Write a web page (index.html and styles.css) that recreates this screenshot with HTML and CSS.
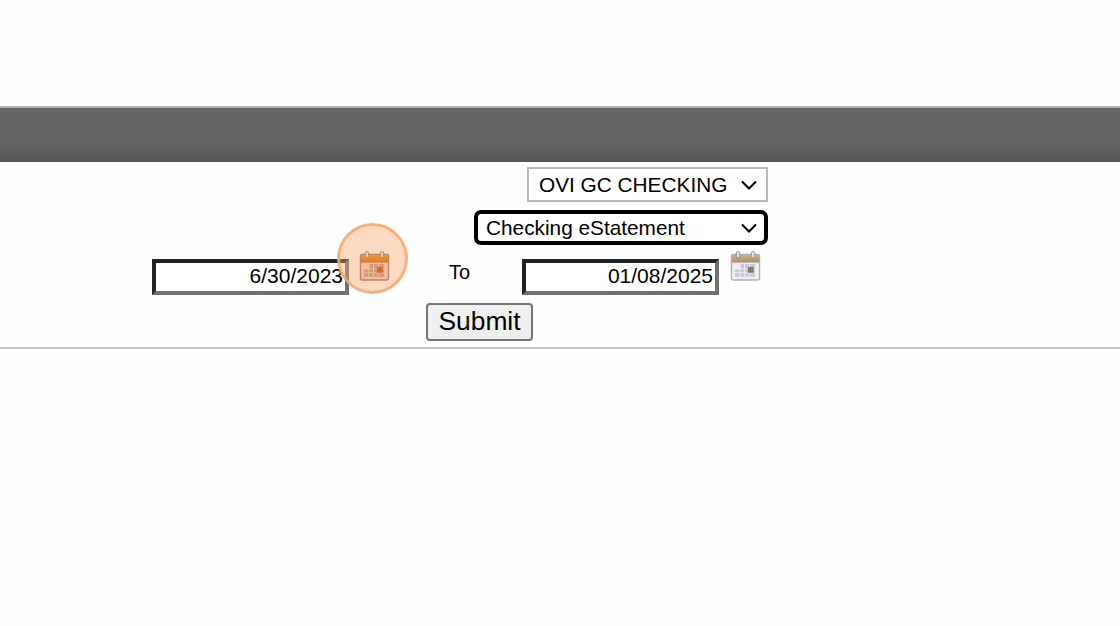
FILE: index.html
```html
<!DOCTYPE html>
<html lang="en">
<head>
<meta charset="utf-8">
<title>Statements</title>
<link rel="stylesheet" href="styles.css">
</head>
<body>
<svg class="defs" width="0" height="0" aria-hidden="true">
  <defs>
    <linearGradient id="head" x1="0" y1="0" x2="0" y2="1">
      <stop offset="0" stop-color="#e8920f"/>
      <stop offset="1" stop-color="#c94c00"/>
    </linearGradient>
    <linearGradient id="head-muted" x1="0" y1="0" x2="0" y2="1">
      <stop offset="0" stop-color="#c9b48e"/>
      <stop offset="1" stop-color="#a98f70"/>
    </linearGradient>
    <symbol id="cal" viewBox="0 0 32 32">
      <rect x="1.5" y="4" width="29" height="26.5" rx="1.5" fill="#e6cfc6" stroke="#94665a" stroke-width="1.4"/>
      <rect x="2" y="4.5" width="28" height="8" fill="url(#head)"/>
      <rect x="6.5" y="1" width="3.5" height="6.5" rx="1.7" fill="#e6dfd2" stroke="#6b5a48" stroke-width=".8"/>
      <rect x="22" y="1" width="3.5" height="6.5" rx="1.7" fill="#e6dfd2" stroke="#6b5a48" stroke-width=".8"/>
      <path d="M11 14h15v13H5v-8h6z" fill="#b98a82"/>
      <path d="M5 19h21M5 23h21M10 14v13M15 14v13M20 14v13" stroke="#e6cfc6" stroke-width="1" fill="none"/>
      <rect x="18.5" y="17" width="6" height="6" fill="#bd3a05"/>
    </symbol>
    <symbol id="cal-muted" viewBox="0 0 32 32">
      <rect x="1.5" y="4" width="29" height="26.5" rx="1.5" fill="#f2f0f2" stroke="#b5adb3" stroke-width="1.4"/>
      <rect x="2" y="4.5" width="28" height="8" fill="url(#head-muted)"/>
      <rect x="6.5" y="1" width="3.5" height="6.5" rx="1.7" fill="#e6e2dc" stroke="#8a8580" stroke-width=".8"/>
      <rect x="22" y="1" width="3.5" height="6.5" rx="1.7" fill="#e6e2dc" stroke="#8a8580" stroke-width=".8"/>
      <path d="M11 14h15v13H5v-8h6z" fill="#c3cad9"/>
      <path d="M5 19h21M5 23h21M10 14v13M15 14v13M20 14v13" stroke="#f2f0f2" stroke-width="1" fill="none"/>
      <rect x="18.5" y="17" width="6" height="6" fill="#8f7765"/>
    </symbol>
  </defs>
</svg>
<div class="top-space"></div>
<div class="bar"></div>
<form class="form">
  <div class="row-end row-account">
    <select class="select select-account"><option>OVI GC CHECKING</option></select>
  </div>
  <div class="row-end row-type">
    <select class="select select-type"><option>Checking eStatement</option></select>
  </div>
  <div class="row-dates">
    <input class="date" type="text" value="6/30/2023">
    <svg class="cal cal-from"><use href="#cal"/></svg>
    <span class="to">To</span>
    <input class="date" type="text" value="01/08/2025">
    <svg class="cal cal-until"><use href="#cal-muted"/></svg>
  </div>
  <div class="row-submit">
    <button class="submit" type="button">Submit</button>
  </div>
</form>
<hr class="rule">
<div class="highlight"></div>
</body>
</html>
```
FILE: styles.css
```css
* { box-sizing: border-box; }
html, body { margin: 0; padding: 0; }
body {
  position: relative;
  height: 626px;
  overflow: hidden;
  background: #fefefe;
  color: #000;
  font-family: "Liberation Sans", Arial, sans-serif;
}
.defs { display: block; height: 0; }
.top-space { height: 106px; }
.bar {
  height: 56px;
  border-top: 2px solid #b4b4b4;
  background: linear-gradient(#666 0, #646464 65%, #555 100%);
}
.form { width: 768px; }
.row-end { display: flex; justify-content: flex-end; }
.row-account { padding-top: 5px; }
.row-type { padding-top: 8px; }
.select {
  appearance: none;
  display: block;
  margin: 0;
  background-color: #fff;
  background-image: url("data:image/svg+xml,%3Csvg xmlns='http://www.w3.org/2000/svg' width='16' height='10'%3E%3Cpath d='M1 1.5l7 7 7-7' fill='none' stroke='%23000' stroke-width='2'/%3E%3C/svg%3E");
  background-repeat: no-repeat;
  color: #000;
  font-family: inherit;
  font-size: 20.8px;
}
.select-account {
  width: 241px;
  height: 35px;
  padding: 0 30px 0 10px;
  border: 2px solid #b8b8b8;
  background-position: right 9px center;
}
.select-type {
  width: 294px;
  height: 35px;
  padding: 0 30px 0 8px;
  border: 4px solid #000;
  border-radius: 7px;
  background-position: right 7px center;
}
.row-dates {
  display: flex;
  align-items: flex-start;
  margin-left: 152px;
  padding-top: 5px;
}
.date {
  width: 197px;
  height: 36px;
  margin: 9px 0 0;
  padding: 0 2px 2px 0;
  border-style: solid;
  border-width: 4px;
  border-color: #232323 #707070 #707070 #232323;
  background: #fff;
  color: #000;
  font-family: inherit;
  font-size: 21px;
  text-align: right;
}
.cal {
  flex: none;
  width: 31px;
  height: 32px;
  filter: blur(.4px);
}
.cal-from { margin: 0 0 0 10px; }
.cal-until { margin: 0 0 0 11px; }
.to {
  width: 132px;
  padding: 10px 0 0 59px;
  font-size: 20px;
  line-height: 24px;
}
.row-submit {
  display: flex;
  padding: 8px 0 0 426px;
}
.submit {
  width: 107px;
  height: 38px;
  margin: 0;
  padding: 0 0 2px;
  border: 2px solid #767676;
  border-radius: 4px;
  background: #efefef;
  color: #000;
  font-family: inherit;
  font-size: 26.4px;
}
.rule {
  height: 2px;
  margin: 6px 0 0;
  border: 0;
  background: #c4c4c4;
}
.highlight {
  position: absolute;
  left: 337px;
  top: 223px;
  width: 71px;
  height: 71px;
  border: 3px solid rgba(246, 170, 110, .85);
  border-radius: 50%;
  background: rgba(250, 170, 110, .42);
}
```
